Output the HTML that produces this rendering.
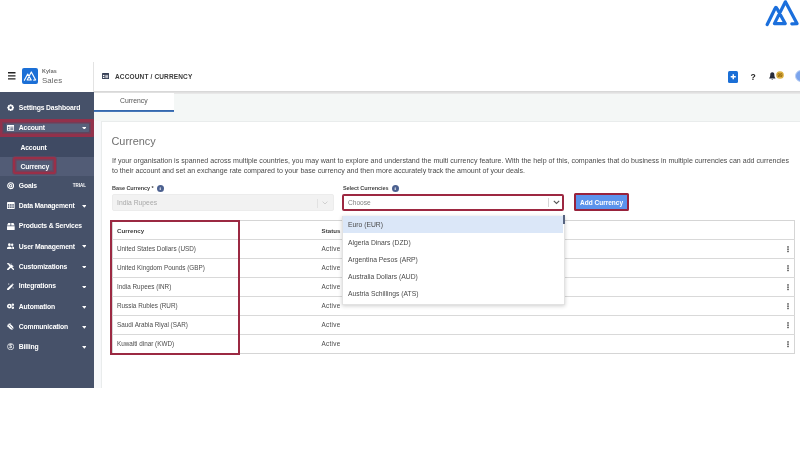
<!DOCTYPE html>
<html lang="en">
<head>
<meta charset="utf-8">
<title>Kylas Sales - Account / Currency</title>
<style>
*{box-sizing:border-box;margin:0;padding:0}
html,body{width:800px;height:450px;overflow:hidden;background:#fff}
body{position:relative;font-family:"Liberation Sans",sans-serif;color:#444;-webkit-font-smoothing:antialiased;will-change:transform}
.abs{position:absolute;white-space:nowrap}
/* top-right brand mark */
#brand{left:760px;top:0;width:40px;height:30px}
/* header */
#hdr{left:0;top:62px;width:800px;height:30px;background:#fff}
#hdrshadow{left:94px;top:91px;width:706px;height:3px;background:linear-gradient(#d4d4d4,#ececec)}
#hsep{left:93px;top:62px;width:1px;height:30px;background:#e3e3e3}
#burger{left:8.1px;top:72.4px;width:7.5px;height:8px}
#logo{left:22.1px;top:68.4px;width:16px;height:16px;background:#1b6fd6;border-radius:2px}
#kylas{left:42px;top:67.6px;font-size:5.4px;line-height:7px;color:#6a6a6a;font-weight:bold;letter-spacing:.1px}
#sales{left:42px;top:75.9px;font-size:7.9px;line-height:10px;color:#666;letter-spacing:.1px}
#crumbico{left:101.9px;top:73.3px;width:7.1px;height:6px}
#crumb{left:115px;top:72px;font-size:6.5px;line-height:9px;font-weight:bold;color:#3a3a3a;letter-spacing:.15px}
#plus{left:727.5px;top:71px;width:10.5px;height:11.5px;background:#1b6fd6;border-radius:1.5px}
#q{left:750.4px;top:71.8px;font-size:8.6px;line-height:11px;font-weight:bold;color:#222}
#bell{left:769.2px;top:72px;width:6.6px;height:8.2px}
#badge{left:776.4px;top:70.8px;width:8px;height:8px}
#avatar{left:794.8px;top:69.8px;width:12.6px;height:12.6px;border-radius:50%;background:#7ba4ec;border:1.5px solid #b9cff5}
/* sidebar */
#side{left:0;top:91.6px;width:93.8px;height:296px;background:#465169}
#subbg{left:0;top:137px;width:93.8px;height:19.5px;background:#3f4a63}
#subact{left:0;top:156.5px;width:93.8px;height:19px;background:#525c76}
.mi{left:18.8px;font-size:6.8px;line-height:10px;font-weight:bold;color:#fff;letter-spacing:-.16px}
.car{left:81.6px;width:4.6px;height:2.7px}
.ic{left:7px;width:7.3px}
#trial{left:72.8px;top:183.2px;font-size:4.5px;line-height:6px;font-weight:bold;color:#fff;letter-spacing:0}
.red{border:2px solid #a5283f;border-radius:2px}
/* content */
#strip{left:94px;top:94px;width:706px;height:293.5px;background:#f4f7f6}
#tab{left:94px;top:93px;width:80.3px;height:17.5px;background:#fff}
#tabline{left:94px;top:110px;width:80.3px;height:2px;background:linear-gradient(#2b60a8,#4f7fbd)}
#tabtxt{left:120px;top:95.7px;font-size:6.8px;line-height:9px;color:#555}
#card{left:101px;top:121px;width:700px;height:266.5px;background:#fff;border:1px solid #e9ecec;border-bottom:none}
#below{left:0;top:387.5px;width:800px;height:63px;background:#fff}
#h1{left:111.5px;top:133px;font-size:10.9px;line-height:16px;color:#707070;letter-spacing:0}
.desc{left:112px;font-size:7.05px;line-height:10px;color:#4a4a4a}
.lbl{font-size:5.5px;line-height:8px;font-weight:bold;color:#444;letter-spacing:-.06px}
.info{width:7px;height:7px;border-radius:50%;background:#4c6190}
.info span{position:absolute;left:0;top:0;width:7px;text-align:center;font-size:5px;line-height:7px;color:#fff;font-weight:bold;font-family:"Liberation Serif",serif}
#sel1{left:112px;top:194px;width:222px;height:17px;background:#f2f2f2;border:1px solid #ececec;border-radius:2px}
#sel1t{left:117px;top:198px;font-size:6.8px;line-height:9px;color:#a9a9a9}
#sel2{left:344px;top:195px;width:219px;height:15px;background:#fff}
#sel2t{left:348px;top:198px;font-size:6.6px;line-height:9px;color:#808080}
.vsep{width:1px;height:9px;background:#d6d6d6}
#btn{left:575px;top:194.5px;width:53.2px;height:15.2px;background:#5b93ec;border-radius:1px}
#btnt{left:575.3px;top:197.6px;width:52.5px;text-align:center;font-size:6.5px;line-height:9px;color:#fff;font-weight:bold}
/* table */
#tbl{left:112px;top:220px;width:683px;height:134px;border:1px solid #d5d5d5;background:#fff}
.hl{left:112px;width:683px;height:1px;background:#d9d9d9}
.th{font-size:6.15px;line-height:9px;font-weight:bold;color:#3c3c3c;letter-spacing:.04px}
.td{font-size:6.35px;line-height:9px;color:#4c4c4c}
.keb{left:787px;width:2px;height:6.4px}
/* dropdown */
#dd{left:342px;top:216px;width:222.5px;height:88.5px;background:#fff;box-shadow:0 1px 4px rgba(0,0,0,.2);border:1px solid #e2e2e2;border-top:none}
#ddhl{left:342.5px;top:216px;width:220px;height:16.5px;background:#dbe7f8}
#ddthumb{left:563.3px;top:215px;width:1.4px;height:9px;background:#56637f}
.dd{left:348px;font-size:6.75px;line-height:9px;color:#4a4a4a}
</style>
</head>
<body>

<!-- brand mark top right -->
<svg id="brand" class="abs" viewBox="760 0 40 30"><path d="M767.2 24.5 L774.7 9.2 Q775.9 5.6 777.2 9.1 L785.2 23.6 L774.4 23.6 L785.4 1.8 L797 23.6 L791.8 23.8" fill="none" stroke="#1b6fdc" stroke-width="3.2" stroke-linecap="round" stroke-linejoin="round"/></svg>

<!-- content backgrounds -->
<div id="strip" class="abs"></div>
<div class="abs" style="left:94px;top:121px;width:7px;height:266.5px;background:#f7f8fa"></div>
<div id="card" class="abs"></div>
<div id="below" class="abs"></div>

<!-- header -->
<div id="hdr" class="abs"></div>
<div id="hdrshadow" class="abs"></div>
<div id="hsep" class="abs"></div>
<svg id="burger" class="abs" viewBox="0 0 7.5 8"><path d="M0 .7H7.5M0 3.8H7.5M0 6.9H7.5" stroke="#222" stroke-width="1.35" fill="none"/></svg>
<div id="logo" class="abs"><svg viewBox="0 0 16 16" width="16" height="16" style="display:block"><path d="M2.35 12.3 L5.72 6.05 L9.23 12 L5.19 12 L9.31 3.9 L13.65 12 L11.7 12.08" fill="none" stroke="#fff" stroke-width="1.15" stroke-linecap="round" stroke-linejoin="round"/></svg></div>
<div id="kylas" class="abs">Kylas</div>
<div id="sales" class="abs">Sales</div>
<svg id="crumbico" class="abs" viewBox="0 0 7 6"><rect x="0" y="0" width="7" height="6" rx=".6" fill="#353e54"/><rect x=".9" y="1.9" width="1.5" height="1.2" fill="#fff"/><rect x=".9" y="3.8" width="1.5" height="1.2" fill="#fff"/><rect x="3.2" y="1.9" width="2.9" height=".7" fill="#fff"/><rect x="3.2" y="3.2" width="2.9" height=".7" fill="#fff"/><rect x="3.2" y="4.4" width="2.9" height=".7" fill="#fff"/></svg>
<div id="crumb" class="abs">ACCOUNT / CURRENCY</div>
<div id="plus" class="abs"><svg viewBox="0 0 10.5 11.5" width="10.5" height="11.5" style="display:block"><path d="M5.25 3.2 V8.3 M2.7 5.75 H7.8" stroke="#fff" stroke-width="1.5" fill="none"/></svg></div>
<div id="q" class="abs">?</div>
<svg id="bell" class="abs" viewBox="0 0 7 8.5"><path d="M3.5 .3 C1.9 .3 1.3 1.6 1.3 3 C1.3 4.6 .9 5.4 .2 6.2 V6.8 H6.8 V6.2 C6.1 5.4 5.7 4.6 5.7 3 C5.7 1.6 5.1 .3 3.5 .3 Z" fill="#272c3a"/><path d="M2.6 7.3 A.95 .95 0 0 0 4.4 7.3 Z" fill="#272c3a"/></svg>
<svg id="badge" class="abs" viewBox="0 0 8 8"><circle cx="4" cy="4" r="3.85" fill="#deb244"/><text x="3.9" y="5.6" font-size="4.5" font-weight="bold" text-anchor="middle" fill="#8a5c00" letter-spacing="-.2" font-family="Liberation Sans, sans-serif">99</text></svg>
<div id="avatar" class="abs"></div>

<!-- sidebar -->
<div id="side" class="abs"></div>
<div id="subbg" class="abs"></div>
<div id="subact" class="abs"></div>

<div class="abs" style="left:5.8px;top:123.2px;width:83px;height:9.3px;background:#57617b;border-radius:1px"></div>
<div class="abs red" style="left:-1px;top:118.6px;width:94.5px;height:18.3px;border-width:3px;border-radius:1px;border-color:#92314b;box-shadow:inset 0 0 0 1.4px #743c56"></div>
<div class="abs red" style="left:13.2px;top:157px;width:42.8px;height:16.7px;border-color:#9a2f48;box-shadow:inset 0 0 0 1.5px #74405a,0 0 0 .8px #6a4560"></div>

<!-- sidebar icons -->
<svg class="abs ic" style="top:104.1px;height:7.3px" viewBox="0 0 8 8"><path d="M4 .2 L5 .5 L5.3 1.3 L6.2 1 L7 1.8 L6.7 2.7 L7.5 3 L7.8 4 L7.5 5 L6.7 5.3 L7 6.2 L6.2 7 L5.3 6.7 L5 7.5 L4 7.8 L3 7.5 L2.7 6.7 L1.8 7 L1 6.2 L1.3 5.3 L.5 5 L.2 4 L.5 3 L1.3 2.7 L1 1.8 L1.8 1 L2.7 1.3 L3 .5 Z M4 2.6 A1.4 1.4 0 1 0 4 5.4 A1.4 1.4 0 1 0 4 2.6 Z" fill="#fff" fill-rule="evenodd"/></svg>
<svg class="abs ic" style="top:125px;height:5.75px" viewBox="0 0 8 6.3"><rect x="0" y="0" width="8" height="6.3" rx=".6" fill="#fff"/><rect x="1" y="1.9" width="1.7" height="1.3" fill="#57617b"/><rect x="1" y="4" width="1.7" height="1.3" fill="#57617b"/><rect x="3.6" y="1.9" width="3.4" height=".8" fill="#57617b"/><rect x="3.6" y="3.2" width="3.4" height=".8" fill="#57617b"/><rect x="3.6" y="4.5" width="3.4" height=".8" fill="#57617b"/></svg>
<svg class="abs ic" style="top:182.35px;height:7.3px" viewBox="0 0 8 8"><circle cx="4" cy="4" r="3.2" fill="none" stroke="#fff" stroke-width="1.25"/><circle cx="4" cy="4" r="1.35" fill="none" stroke="#fff" stroke-width="1.1"/></svg>
<svg class="abs ic" style="top:202.45px;height:7.1px;width:7.7px" viewBox="0 0 8 7.4"><rect x="0" y="0" width="8" height="7.4" rx=".7" fill="#fff"/><g fill="#465169"><rect x=".9" y="2.3" width="1.6" height="1.5"/><rect x="3.2" y="2.3" width="1.6" height="1.5"/><rect x="5.5" y="2.3" width="1.6" height="1.5"/><rect x=".9" y="4.6" width="1.6" height="1.5"/><rect x="3.2" y="4.6" width="1.6" height="1.5"/><rect x="5.5" y="4.6" width="1.6" height="1.5"/></g></svg>
<svg class="abs ic" style="top:223.05px;height:7.1px;width:7.7px" viewBox="0 0 8 7.4"><path d="M1.2 0 H3.6 V2.6 H0 Z M4.4 0 H6.8 L8 2.6 H4.4 Z M0 3.3 H8 V6.8 Q8 7.4 7.4 7.4 H.6 Q0 7.4 0 6.8 Z" fill="#fff"/></svg>
<svg class="abs ic" style="top:243.4px;height:6.39px" viewBox="0 0 8 7"><circle cx="2.6" cy="1.9" r="1.5" fill="#fff"/><circle cx="5.7" cy="1.9" r="1.3" fill="#fff"/><path d="M0 6.6 V5.6 Q0 3.9 2.6 3.9 Q5.2 3.9 5.2 5.6 V6.6 Z" fill="#fff"/><path d="M5.8 6.6 V5.4 Q5.8 4.5 5.3 3.9 Q8 3.7 8 5.6 V6.6 Z" fill="#fff"/></svg>
<svg class="abs ic" style="top:262.95px;height:7.3px" viewBox="0 0 8 8"><path d="M1 7 L5.2 2.8" stroke="#fff" stroke-width="1.9" stroke-linecap="round"/><path d="M4.9 .3 A2.1 2.1 0 1 0 7.7 3.1 L6.3 3.5 L4.6 1.8 Z" fill="#fff"/><path d="M.9 .6 L2.4 1.4 L2.6 2.5 L7 6.9" stroke="#fff" stroke-width="1.5" stroke-linecap="round" fill="none"/></svg>
<svg class="abs ic" style="top:282.85px;height:7.3px" viewBox="0 0 8 8"><path d="M1.1 6.9 L5.3 2.7" stroke="#fff" stroke-width="2.1" stroke-linecap="round"/><path d="M6.4 0 L6.8 1 L7.8 1.4 L6.8 1.8 L6.4 2.8 L6 1.8 L5 1.4 L6 1 Z M2 .2 L2.3 .9 L3 1.2 L2.3 1.5 L2 2.2 L1.7 1.5 L1 1.2 L1.7 .9 Z M6.6 4.4 L6.9 5.1 L7.6 5.4 L6.9 5.7 L6.6 6.4 L6.3 5.7 L5.6 5.4 L6.3 5.1 Z" fill="#fff"/></svg>
<svg class="abs ic" style="top:303.31px;height:6.39px" viewBox="0 0 8 7"><circle cx="2.6" cy="3.5" r="1.75" fill="none" stroke="#fff" stroke-width="1.7"/><circle cx="6.4" cy="1.8" r=".8" fill="none" stroke="#fff" stroke-width="1.1"/><circle cx="6.4" cy="5.3" r=".8" fill="none" stroke="#fff" stroke-width="1.1"/></svg>
<svg class="abs ic" style="top:322.95px;height:7.3px" viewBox="0 0 8 8"><ellipse cx="4" cy="4.2" rx="2.1" ry="3.6" transform="rotate(-45 4 4.2)" fill="#fff"/><path d="M1.2 1.4 L6.6 6.8" stroke="#465169" stroke-width=".8"/><path d="M.4 4.2 A3.7 3.7 0 0 1 4 .5" stroke="#fff" stroke-width=".8" fill="none"/></svg>
<svg class="abs ic" style="top:343.15px;height:7.3px" viewBox="0 0 8 8"><circle cx="4" cy="4" r="3.4" fill="none" stroke="#fff" stroke-width=".8"/><text x="4" y="6" font-size="5.4" font-weight="bold" text-anchor="middle" fill="#fff" font-family="Liberation Sans, sans-serif">$</text></svg>

<!-- sidebar labels -->
<div class="abs mi" style="top:102.5px">Settings Dashboard</div>
<div class="abs mi" style="top:122.5px">Account</div>
<div class="abs mi" style="top:143px;left:20.5px">Account</div>
<div class="abs mi" style="top:161.5px;left:20.5px">Currency</div>
<div class="abs mi" style="top:181px">Goals</div>
<div id="trial" class="abs">TRIAL</div>
<div class="abs mi" style="top:201px">Data Management</div>
<div class="abs mi" style="top:221px">Products &amp; Services</div>
<div class="abs mi" style="top:241.5px">User Management</div>
<div class="abs mi" style="top:261.5px">Customizations</div>
<div class="abs mi" style="top:281.1px">Integrations</div>
<div class="abs mi" style="top:301.5px">Automation</div>
<div class="abs mi" style="top:321.5px">Communication</div>
<div class="abs mi" style="top:342px">Billing</div>
<svg class="abs car" style="top:126.65px" viewBox="0 0 5 3"><path d="M0 0H5L2.5 3Z" fill="#fff"/></svg>
<svg class="abs car" style="top:205.15px" viewBox="0 0 5 3"><path d="M0 0H5L2.5 3Z" fill="#fff"/></svg>
<svg class="abs car" style="top:245.15px" viewBox="0 0 5 3"><path d="M0 0H5L2.5 3Z" fill="#fff"/></svg>
<svg class="abs car" style="top:265.65px" viewBox="0 0 5 3"><path d="M0 0H5L2.5 3Z" fill="#fff"/></svg>
<svg class="abs car" style="top:285.65px" viewBox="0 0 5 3"><path d="M0 0H5L2.5 3Z" fill="#fff"/></svg>
<svg class="abs car" style="top:306.15px" viewBox="0 0 5 3"><path d="M0 0H5L2.5 3Z" fill="#fff"/></svg>
<svg class="abs car" style="top:326.15px" viewBox="0 0 5 3"><path d="M0 0H5L2.5 3Z" fill="#fff"/></svg>
<svg class="abs car" style="top:346.15px" viewBox="0 0 5 3"><path d="M0 0H5L2.5 3Z" fill="#fff"/></svg>

<!-- tab -->
<div id="tab" class="abs"></div>
<div id="tabline" class="abs"></div>
<div id="tabtxt" class="abs">Currency</div>

<!-- card content -->
<div id="h1" class="abs">Currency</div>
<div class="abs desc" id="d1" style="top:155.6px;letter-spacing:.01px">If your organisation is spanned across multiple countries, you may want to explore and understand the multi currency feature. With the help of this, companies that do business in multiple currencies can add currencies</div>
<div class="abs desc" id="d2" style="top:166px">to their account and set an exchange rate compared to your base currency and then more accurately track the amount of your deals.</div>

<div class="abs lbl" style="left:112px;top:184px">Base Currency *</div>
<div class="abs info" style="left:156.6px;top:185.2px"><span>i</span></div>
<div id="sel1" class="abs"></div>
<div id="sel1t" class="abs">India Rupees</div>
<div class="abs vsep" style="left:317px;top:198.5px;background:#e2e2e2"></div>
<svg class="abs" style="left:322px;top:201px;width:6px;height:4px" viewBox="0 0 6 4"><path d="M.6 .6 L3 3 L5.4 .6" fill="none" stroke="#d0d0d0" stroke-width="1"/></svg>

<div class="abs lbl" style="left:343px;top:184px">Select Currencies</div>
<div class="abs info" style="left:391.6px;top:185.2px"><span>i</span></div>
<div id="sel2" class="abs"></div>
<div class="abs red" style="left:342.2px;top:193.8px;width:222.2px;height:17.3px;border-color:#9d2841"></div>
<div id="sel2t" class="abs">Choose</div>
<div class="abs vsep" style="left:547.5px;top:198px"></div>
<svg class="abs" style="left:552.5px;top:200.3px;width:7px;height:4.6px" viewBox="0 0 7 4.6"><path d="M.8 .8 L3.5 3.5 L6.2 .8" fill="none" stroke="#555" stroke-width="1.1"/></svg>

<div id="btn" class="abs"></div>
<div id="btnt" class="abs">Add Currency</div>
<div class="abs red" style="left:573.7px;top:192.9px;width:55.8px;height:18.3px;border-width:2px;border-radius:1.5px;border-color:#98233c"></div>

<!-- table -->
<div id="tbl" class="abs"></div>
<div class="abs hl" style="top:239.2px"></div>
<div class="abs hl" style="top:258.2px"></div>
<div class="abs hl" style="top:277.2px"></div>
<div class="abs hl" style="top:296.2px"></div>
<div class="abs hl" style="top:315.2px"></div>
<div class="abs hl" style="top:334.2px"></div>
<div class="abs th" style="left:117px;top:225.5px">Currency</div>
<div class="abs th" style="left:321.5px;top:225.5px">Status</div>
<div class="abs td" style="left:117px;top:244.3px">United States Dollars (USD)</div>
<div class="abs td" style="left:117px;top:263.3px">United Kingdom Pounds (GBP)</div>
<div class="abs td" style="left:117px;top:282.3px">India Rupees (INR)</div>
<div class="abs td" style="left:117px;top:301.3px">Russia Rubles (RUR)</div>
<div class="abs td" style="left:117px;top:320.3px">Saudi Arabia Riyal (SAR)</div>
<div class="abs td" style="left:117px;top:339.3px">Kuwaiti dinar (KWD)</div>
<div class="abs td" style="left:321.5px;top:244.3px;letter-spacing:.3px">Active</div>
<div class="abs td" style="left:321.5px;top:263.3px;letter-spacing:.3px">Active</div>
<div class="abs td" style="left:321.5px;top:282.3px;letter-spacing:.3px">Active</div>
<div class="abs td" style="left:321.5px;top:301.3px;letter-spacing:.3px">Active</div>
<div class="abs td" style="left:321.5px;top:320.3px;letter-spacing:.3px">Active</div>
<div class="abs td" style="left:321.5px;top:339.3px;letter-spacing:.3px">Active</div>
<svg class="abs keb" style="top:246.3px" viewBox="0 0 2 6.4"><rect x=".25" y=".2" width="1.5" height="1.5" fill="#4a4a4a"/><rect x=".25" y="2.45" width="1.5" height="1.5" fill="#4a4a4a"/><rect x=".25" y="4.7" width="1.5" height="1.5" fill="#4a4a4a"/></svg>
<svg class="abs keb" style="top:265.3px" viewBox="0 0 2 6.4"><rect x=".25" y=".2" width="1.5" height="1.5" fill="#4a4a4a"/><rect x=".25" y="2.45" width="1.5" height="1.5" fill="#4a4a4a"/><rect x=".25" y="4.7" width="1.5" height="1.5" fill="#4a4a4a"/></svg>
<svg class="abs keb" style="top:284.3px" viewBox="0 0 2 6.4"><rect x=".25" y=".2" width="1.5" height="1.5" fill="#4a4a4a"/><rect x=".25" y="2.45" width="1.5" height="1.5" fill="#4a4a4a"/><rect x=".25" y="4.7" width="1.5" height="1.5" fill="#4a4a4a"/></svg>
<svg class="abs keb" style="top:303.3px" viewBox="0 0 2 6.4"><rect x=".25" y=".2" width="1.5" height="1.5" fill="#4a4a4a"/><rect x=".25" y="2.45" width="1.5" height="1.5" fill="#4a4a4a"/><rect x=".25" y="4.7" width="1.5" height="1.5" fill="#4a4a4a"/></svg>
<svg class="abs keb" style="top:322.3px" viewBox="0 0 2 6.4"><rect x=".25" y=".2" width="1.5" height="1.5" fill="#4a4a4a"/><rect x=".25" y="2.45" width="1.5" height="1.5" fill="#4a4a4a"/><rect x=".25" y="4.7" width="1.5" height="1.5" fill="#4a4a4a"/></svg>
<svg class="abs keb" style="top:341.3px" viewBox="0 0 2 6.4"><rect x=".25" y=".2" width="1.5" height="1.5" fill="#4a4a4a"/><rect x=".25" y="2.45" width="1.5" height="1.5" fill="#4a4a4a"/><rect x=".25" y="4.7" width="1.5" height="1.5" fill="#4a4a4a"/></svg>

<!-- red annotation on table column -->
<div class="abs red" style="left:110px;top:220px;width:130px;height:135px;border-color:#9b2942;border-radius:0"></div>

<!-- dropdown -->
<div id="dd" class="abs"></div>
<div id="ddhl" class="abs"></div>
<div id="ddthumb" class="abs"></div>
<div class="abs dd" style="top:220.2px">Euro (EUR)</div>
<div class="abs dd" style="top:237.8px">Algeria Dinars (DZD)</div>
<div class="abs dd" style="top:254.5px">Argentina Pesos (ARP)</div>
<div class="abs dd" style="top:272.2px">Australia Dollars (AUD)</div>
<div class="abs dd" style="top:289.3px">Austria Schillings (ATS)</div>

</body>
</html>
